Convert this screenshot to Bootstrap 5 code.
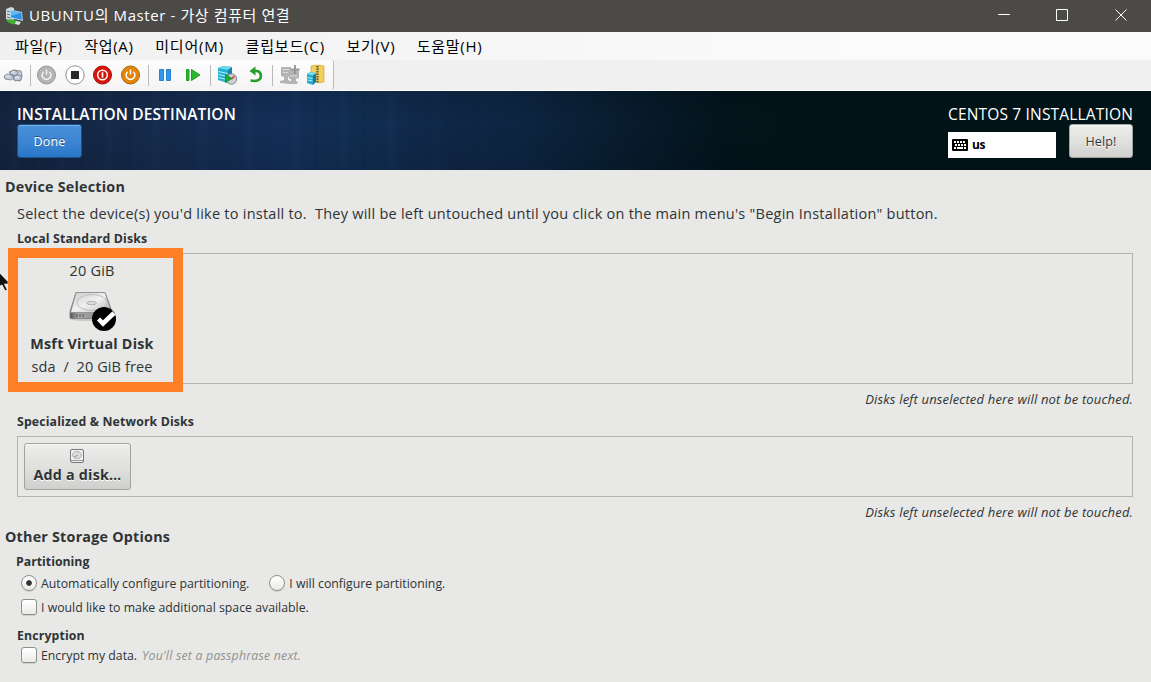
<!DOCTYPE html>
<html lang="ko">
<head>
<meta charset="utf-8">
<title>UBUNTU의 Master - 가상 컴퓨터 연결</title>
<link rel="stylesheet" href="https://cdn.jsdelivr.net/npm/bootstrap@5.3.0/dist/css/bootstrap.min.css">
<style>
body{width:1151px;height:682px;overflow:hidden;background:#e8e8e6;color:#2e3436;font-family:"Open Sans","Noto Sans CJK KR",sans-serif;font-size:14.5px;line-height:20px;letter-spacing:.2px}
svg{display:block;flex:none}
span,h1,h2,h3,p,button,label{white-space:pre}
h1,h2,h3,p{margin:0}
.win-title{height:32px;background:#4b4a47;color:#fff;padding-left:5px;font-family:"Open Sans","Noto Sans CJK KR",sans-serif;font-size:15px;letter-spacing:.6px}
.win-title span{margin:-2px 0 0 5px}
.win-menu{height:28px;background:linear-gradient(90deg,#f0f0f0,#fbfbfb 75%);color:#000;font-family:"Open Sans","Noto Sans CJK KR",sans-serif;font-size:15px;padding-left:15px;gap:21.5px;letter-spacing:.7px}
.menu-wide{letter-spacing:.85px}
.win-tools{height:31px;background:#f0f0f0;border-bottom:1px solid #fff}
.tool-strip{width:334px;height:30px;background:linear-gradient(#fdfdfd,#f4f4f4);border-right:1px solid #bbb;border-radius:0 3px 3px 0}
.inst-head{height:79px;padding:0 18px 0 17px;color:#fff;background:
 linear-gradient(180deg,rgba(0,0,10,.1),transparent 40%,rgba(0,0,10,.1)),
 linear-gradient(90deg,transparent 400px,#0d2541 520px,#071b2b 640px,#03141c 720px,#021418 800px),
 repeating-linear-gradient(90deg,transparent 0 9px,rgba(70,120,190,.04) 13px 16px,transparent 21px 31px,rgba(0,0,20,.05) 34px,transparent 38px 47px),
 linear-gradient(90deg,#14243f 0,#152a4b 150px,#142e57 280px,#102d50 360px,#11284a 450px)}
.inst-head h1,.inst-head h2{font-size:15.5px;line-height:20px;padding-top:13px}
.inst-head h1{font-weight:600;letter-spacing:.14px}
.inst-head h2{font-weight:400;letter-spacing:.17px}
.gbtn{border:1px solid #a2a29e;border-radius:3px;background:linear-gradient(#ededec,#dededc 60%,#cfcfcd);color:#2e3436;padding:0;text-shadow:0 1px #fff;box-shadow:inset 0 1px #f8f8f8}
.gbtn.go{border-color:#1c5187;background:linear-gradient(#4a90d9,#3d86d5 50%,#2a76c6);color:#fff;text-shadow:0 -1px #23558c;box-shadow:inset 0 1px #76b0ec}
.hb{width:65px;height:34px;font-size:12.5px;line-height:31px;letter-spacing:.15px}
.hb.help{width:64px}
.kbd-box{width:108px;height:26px;background:#fff;color:#000;padding-left:4px;font-weight:700;font-size:12px;letter-spacing:-.3px}
.sec{font-weight:700;font-size:14.3px;line-height:20px;letter-spacing:.23px}
.sub{font-weight:700;font-size:12.3px;line-height:20px;letter-spacing:.14px}
.sm{font-size:12.3px;letter-spacing:0}
.note{font-size:13px;font-style:italic;text-align:right;letter-spacing:.17px}
.lead-in{letter-spacing:.244px}
.pane{padding:7px 18px 0 17px}
.out{margin-left:-12px}
.frame{border:1px solid #b4b4b2}
.disk{width:150px;margin-left:-1px}
.mark-box{left:8px;top:248px;width:175px;height:144px;border:10px solid #ff7f27}
.pointer{left:0;top:271px}
.addb{width:107px;height:47px;margin:6px}
.tick{width:16px;height:16px;flex:none;margin:-2px 4px 0;border:1px solid #8f8f8b;border-radius:3px;background:linear-gradient(#fff,#eaeae8);box-shadow:0 1px #cfcfcd}
.tick.rd{border-radius:50%}
.tick.on{background:radial-gradient(circle,#2e3436 2.4px,transparent 3.2px),linear-gradient(#fff,#eaeae8)}
.hint{color:#91928f;font-style:italic;letter-spacing:.22px}
</style>
</head>
<body>
<header class="win-title d-flex align-items-center">
 <svg width="19" height="20" viewBox="0 0 19 20"><path d="M1 3l5-2 3 1v12l-4 1-4-2z" fill="#d3dade"/><path d="M2 5l4 1M2 8l4 1M2 11l4 1" stroke="#66727b"/><path d="M5 3.500l12 2.500 1 9-13-3z" fill="#a9d6f5"/><path d="M6 4.700l10.300 2.100.7 7-11-2.500z" fill="#2d91e2"/><path d="M6 4.700l10.300 2.100-10 3z" fill="#64b9f4"/><path d="M1 14c3-1 6-1 9 0l4 2-3 2c-4 1-8-1-10-4z" fill="#42ad36"/><path d="M11 15l5 1-2 3-4-1z" fill="#dbe1e4"/></svg>
 <span>UBUNTU의 Master - 가상 컴퓨터 연결</span>
 <svg class="ms-auto" width="154" height="32" fill="none" stroke="#fff"><path d="M1 14.500h12M59.500 9.500h11v11h-11zM118.500 9.500l11 11M129.500 9.500l-11 11"/></svg>
</header>
<nav class="win-menu d-flex align-items-center">
 <span>파일(F)</span><span>작업(A)</span><span class="menu-wide">미디어(M)</span><span class="menu-wide">클립보드(C)</span><span>보기(V)</span><span>도움말(H)</span>
</nav>
<div class="win-tools">
 <div class="tool-strip">
  <svg width="333" height="30" viewBox="0 60 333 30" fill="none">
   <path d="M30.500 65v21M148.500 65v21M210.500 65v21M272.500 65v21" stroke="#b9b9b9"/>
   <g stroke="#737d8c" stroke-width=".8" fill="#c3cbd6"><path d="M9 72l5-2 7 1 1 5-2 5-6-1-1-3z"/><path d="M10 72l4-2 4 2-1 3-5 1zM4 76l3-2 6 1 1 3-3 2-6-1zM13 77l4-2 5 1-1 4-6 1z"/><path d="M11 72.500l3-.8M6 76l4 .4M15 77.500l4-.6" stroke="#f5f8fb"/></g>
   <circle cx="46.500" cy="75" r="9" fill="#b4b4b4" stroke="#989898"/>
   <g stroke="#f2f2f2" stroke-width="1.500"><path d="M43.600 71.700a4.400 4.400 0 1 0 5.800 0M46.500 69.500v5"/></g>
   <circle cx="75" cy="75" r="9.200" fill="#fff" stroke="#8f8f8f"/><path d="M71 71h8v8h-8z" fill="#292929"/>
   <circle cx="102.500" cy="75" r="9" fill="#d91409" stroke="#a30f08"/><circle cx="102.500" cy="75" r="4.800" stroke="#fff" stroke-width="1.500"/><path d="M102.500 72.300v5.400" stroke="#fff" stroke-width="1.700"/>
   <circle cx="130.500" cy="75" r="9" fill="#e48509" stroke="#a9680f"/><g stroke="#fff" stroke-width="1.500"><path d="M127.600 71.700a4.400 4.400 0 1 0 5.800 0M130.500 69.500v5"/></g>
   <path d="M159.500 69.500h4v11h-4zM166.500 69.500h4v11h-4z" fill="#2f98ea" stroke="#2483d2"/>
   <path d="M186.500 69.500h2.500v11h-2.500zM191.500 69.500l8.500 5.500-8.500 5.500z" fill="#28b72c" stroke="#1e9d23"/>
   <path d="M218 68l5-2 9 1v12l-4 4-10-3z" fill="#25afcf"/><path d="M218 68l10 2 4-3-9-1z" fill="#6ed9ec"/><path d="M218.500 71.500l9 2M218.500 74.500l9 2M218.500 77.500l8 2" stroke="#b8f3fb"/><path d="M228 70v13l4-4V67z" fill="#1787a8"/>
   <circle cx="231.500" cy="79" r="5.200" fill="#cbd0d3" stroke="#858b8f"/><path d="M231.500 79l3-3" stroke="#c33" stroke-width="1.300"/><path d="M225.500 74.500l6.500 4-6.500 4z" fill="#1faf28" stroke="#137e1b" stroke-width=".7"/>
   <path d="M253.500 71h4c4 1 5 8 0 9.500-2.500.8-4.500.5-7 0" stroke="#269f28" stroke-width="2.600"/><path d="M249.500 71l6-4.500v9z" fill="#269f28"/>
   <g fill="#b4b4b4"><path d="M281 67h10v9l-3 1v3l4 2-2 2-10-1v-2l4-1v-3l-3-1z"/><path d="M289 69h10v9l-3 1v2l2 1-1 2h-9l-1-2 4-1v-2h-2z"/></g><path d="M283 69.500h6M283 72.500h5M290 76h7" stroke="#d9d9d9"/><path d="M295 65v9M290.500 69.500h9" stroke="#999" stroke-width="2"/>
   <path d="M311 66l6-1v17h-6zM318 65l6 1v16l-6 1z" fill="#f2cf59" stroke="#c79e2a" stroke-width=".6"/><path d="M317.500 66v17" stroke="#555" stroke-width="2" stroke-dasharray="1.500 1"/>
   <path d="M307 74l3-2 6 1v9l-3 3-6-2z" fill="#24abd0"/><path d="M307 74l6 1.500 3-2.500-6-1z" fill="#79def0"/><path d="M307.500 77.500l5 1M307.500 80l5 1" stroke="#aeeef8"/><path d="M313 75.500v9l3-3v-8z" fill="#12799c"/>
  </svg>
 </div>
</div>
<section class="inst-head d-flex justify-content-between">
 <div><h1>INSTALLATION DESTINATION</h1><button class="gbtn go hb d-block">Done</button></div>
 <div>
  <h2>CENTOS 7 INSTALLATION</h2>
  <div class="d-flex justify-content-between align-items-start">
   <div class="kbd-box d-flex align-items-center" style="margin-top:8px">
    <svg width="16" height="12"><rect width="16" height="12" rx="1"/><path d="M2 3h12M3 6h11" stroke="#fff" stroke-width="2" stroke-dasharray="2 1"/><path d="M2 9h2M5 9h6M12 9h2" stroke="#fff" stroke-width="2"/></svg>
    <span class="ms-1">us</span>
   </div>
   <button class="gbtn hb help">Help!</button>
  </div>
 </div>
</section>
<main class="pane">
 <h2 class="sec out">Device Selection</h2>
 <p class="lead-in" style="margin-top:7px">Select the device(s) you'd like to install to.  They will be left untouched until you click on the main menu's "Begin Installation" button.</p>
 <h3 class="sub" style="margin-top:5px">Local Standard Disks</h3>
 <div class="frame" style="margin-top:4px;height:131px">
  <div class="disk d-flex flex-column align-items-center" style="padding-top:7px">
   <span>20 GiB</span>
   <svg width="50" height="42" viewBox="0 0 50 42" style="margin:10px 0 1px">
    <defs><linearGradient id="top" x2="1" y2="1"><stop stop-color="#c9c9c9"/><stop offset=".5" stop-color="#f1f1f1"/><stop offset="1" stop-color="#b5b5b5"/></linearGradient><linearGradient id="side"><stop stop-color="#555"/><stop offset=".2" stop-color="#aaa"/><stop offset="1" stop-color="#777"/></linearGradient></defs>
    <ellipse cx="24" cy="28" rx="22" ry="2" fill="#aaa" opacity=".5"/>
    <path d="M9 1.500h29l7 19v6l-1 1H4l-1-1v-6z" fill="url(#side)" stroke="#777" stroke-width=".8"/>
    <path d="M9 1.500h29l6.500 20h-41z" fill="url(#top)" stroke="#8b8b8b" stroke-width=".8"/>
    <ellipse cx="25" cy="11.500" rx="15" ry="8" fill="none" stroke="#b4b4b4" stroke-width=".8"/><ellipse cx="24.500" cy="12" rx="5" ry="1.700" fill="#ddd" stroke="#999" stroke-width=".7"/>
    <path d="M10 23v3M13 23v3M16 23v3" stroke="#555"/>
    <circle cx="37" cy="28" r="12"/><path d="M31.500 28l4.500 4.500 11-10.500" fill="none" stroke="#fff" stroke-width="4.500"/>
   </svg>
   <span class="sec">Msft Virtual Disk</span>
   <span style="margin-top:3px;letter-spacing:.1px">sda  /  20 GiB free</span>
  </div>
 </div>
 <p class="note" style="margin-top:5px">Disks left unselected here will not be touched.</p>
 <h3 class="sub" style="margin-top:3px">Specialized &amp; Network Disks</h3>
 <div class="frame" style="margin-top:4px;height:61px">
  <button class="gbtn addb d-flex flex-column align-items-center">
   <svg width="14" height="14" style="margin:5px 1px 0 0"><rect x=".5" y=".5" width="13" height="13" rx="1.500" fill="#f2f2f2" stroke="#777"/><path d="M1 11.500h12" stroke="#999"/><ellipse cx="7" cy="6" rx="4.500" ry="3.500" fill="#ddd" stroke="#b5b5b5"/><path d="M4 8l4-2" stroke="#999"/></svg>
   <span class="sec" style="margin-top:2px">Add a disk…</span>
  </button>
 </div>
 <p class="note" style="margin-top:5px">Disks left unselected here will not be touched.</p>
 <h2 class="sec out" style="margin-top:5px">Other Storage Options</h2>
 <h3 class="sub" style="margin:5px 0 0 -1px;letter-spacing:0">Partitioning</h3>
 <div class="d-flex align-items-center sm" style="margin-top:2px">
  <i class="tick rd on"></i><span>Automatically configure partitioning.</span>
  <i class="tick rd" style="margin-left:20px"></i><span>I will configure partitioning.</span>
 </div>
 <div class="d-flex align-items-center sm" style="margin-top:4px"><i class="tick"></i><span>I would like to make additional space available.</span></div>
 <h3 class="sub" style="margin-top:8px">Encryption</h3>
 <div class="d-flex align-items-center sm"><i class="tick"></i><span>Encrypt my data.</span><span class="hint" style="margin-left:5px">You'll set a passphrase next.</span></div>
</main>
<div class="mark-box position-absolute"></div>
<svg class="pointer position-absolute" width="8" height="21"><path d="M-3-1l11 11.500v3l-3.500-.5 3 6-2.500 1-3-6-5 3z" fill="#111" stroke="#fff" stroke-width=".9"/></svg>
<script src="https://cdn.jsdelivr.net/npm/bootstrap@5.3.0/dist/js/bootstrap.bundle.min.js"></script>
</body>
</html>
